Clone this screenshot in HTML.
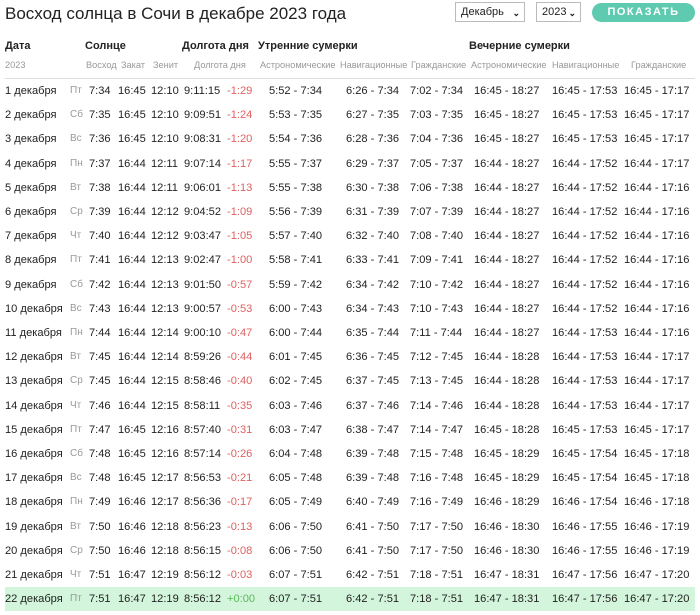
<!DOCTYPE html>
<html><head><meta charset="utf-8"><style>
*{margin:0;padding:0;box-sizing:border-box}
body{width:700px;height:615px;background:#fff;font-family:"Liberation Sans",Arial,sans-serif;color:#222;position:relative;overflow:hidden}
.t{position:absolute;left:5px;top:4px;font-size:17px;color:#222}
.sel{position:absolute;top:2px;height:20px;border:1px solid #bbb;font-size:11px;line-height:18px;padding-left:5px;background:#fff}
.sel b{position:absolute;right:4px;top:1px;font-size:9px}
.btn{position:absolute;left:592px;top:3px;width:103px;height:19px;border-radius:10px;background:#5ecbb0;color:#fff;font-weight:bold;font-size:11px;letter-spacing:1.5px;text-align:center;line-height:19px}
.h{position:absolute;top:40px;font-size:11px;font-weight:bold}
.s{position:absolute;top:60px;font-size:9.2px;color:#999}
.line{position:absolute;left:5px;top:78px;width:690px;height:1px;background:#ddd}
.r{position:absolute;left:5px;width:690px;height:24px;font-size:11.1px;line-height:24px}
.r span{position:absolute;white-space:nowrap}
.hl{background:#d3f5dc}
.a{left:0}.b{left:65px;color:#999;font-size:10px}.c{left:84px}.d{left:113px}.e{left:146px}.f{left:179px}.g{left:222px;color:#e06060}.gg{left:222px;color:#5cb85c}
.i{left:264px}.j{left:341px}.k{left:405px}.l{left:469px}.m{left:547px}.n{left:619px}
</style></head><body>
<div class="t">Восход солнца в Сочи в декабре 2023 года</div>
<div class="sel" style="left:455px;width:70px">Декабрь<b>&#8964;</b></div>
<div class="sel" style="left:536px;width:45px">2023<b>&#8964;</b></div>
<div class="btn">ПОКАЗАТЬ</div>
<div class="h" style="left:5px">Дата</div>
<div class="h" style="left:85px">Солнце</div>
<div class="h" style="left:182px">Долгота дня</div>
<div class="h" style="left:258px">Утренние сумерки</div>
<div class="h" style="left:469px">Вечерние сумерки</div>
<div class="s" style="left:5px">2023</div>
<div class="s" style="left:86px">Восход</div>
<div class="s" style="left:121px">Закат</div>
<div class="s" style="left:153px">Зенит</div>
<div class="s" style="left:194px">Долгота дня</div>
<div class="s" style="left:260px">Астрономические</div>
<div class="s" style="left:340px">Навигационные</div>
<div class="s" style="left:411px">Гражданские</div>
<div class="s" style="left:471px">Астрономические</div>
<div class="s" style="left:552px">Навигационные</div>
<div class="s" style="left:631px">Гражданские</div>
<div class="line"></div>

<div class="r" style="top:79px"><span class="a">1 декабря</span><span class="b">Пт</span><span class="c">7:34</span><span class="d">16:45</span><span class="e">12:10</span><span class="f">9:11:15</span><span class="g">-1:29</span><span class="i">5:52 - 7:34</span><span class="j">6:26 - 7:34</span><span class="k">7:02 - 7:34</span><span class="l">16:45 - 18:27</span><span class="m">16:45 - 17:53</span><span class="n">16:45 - 17:17</span></div>
<div class="r" style="top:103px"><span class="a">2 декабря</span><span class="b">Сб</span><span class="c">7:35</span><span class="d">16:45</span><span class="e">12:10</span><span class="f">9:09:51</span><span class="g">-1:24</span><span class="i">5:53 - 7:35</span><span class="j">6:27 - 7:35</span><span class="k">7:03 - 7:35</span><span class="l">16:45 - 18:27</span><span class="m">16:45 - 17:53</span><span class="n">16:45 - 17:17</span></div>
<div class="r" style="top:127px"><span class="a">3 декабря</span><span class="b">Вс</span><span class="c">7:36</span><span class="d">16:45</span><span class="e">12:10</span><span class="f">9:08:31</span><span class="g">-1:20</span><span class="i">5:54 - 7:36</span><span class="j">6:28 - 7:36</span><span class="k">7:04 - 7:36</span><span class="l">16:45 - 18:27</span><span class="m">16:45 - 17:53</span><span class="n">16:45 - 17:17</span></div>
<div class="r" style="top:152px"><span class="a">4 декабря</span><span class="b">Пн</span><span class="c">7:37</span><span class="d">16:44</span><span class="e">12:11</span><span class="f">9:07:14</span><span class="g">-1:17</span><span class="i">5:55 - 7:37</span><span class="j">6:29 - 7:37</span><span class="k">7:05 - 7:37</span><span class="l">16:44 - 18:27</span><span class="m">16:44 - 17:52</span><span class="n">16:44 - 17:17</span></div>
<div class="r" style="top:176px"><span class="a">5 декабря</span><span class="b">Вт</span><span class="c">7:38</span><span class="d">16:44</span><span class="e">12:11</span><span class="f">9:06:01</span><span class="g">-1:13</span><span class="i">5:55 - 7:38</span><span class="j">6:30 - 7:38</span><span class="k">7:06 - 7:38</span><span class="l">16:44 - 18:27</span><span class="m">16:44 - 17:52</span><span class="n">16:44 - 17:16</span></div>
<div class="r" style="top:200px"><span class="a">6 декабря</span><span class="b">Ср</span><span class="c">7:39</span><span class="d">16:44</span><span class="e">12:12</span><span class="f">9:04:52</span><span class="g">-1:09</span><span class="i">5:56 - 7:39</span><span class="j">6:31 - 7:39</span><span class="k">7:07 - 7:39</span><span class="l">16:44 - 18:27</span><span class="m">16:44 - 17:52</span><span class="n">16:44 - 17:16</span></div>
<div class="r" style="top:224px"><span class="a">7 декабря</span><span class="b">Чт</span><span class="c">7:40</span><span class="d">16:44</span><span class="e">12:12</span><span class="f">9:03:47</span><span class="g">-1:05</span><span class="i">5:57 - 7:40</span><span class="j">6:32 - 7:40</span><span class="k">7:08 - 7:40</span><span class="l">16:44 - 18:27</span><span class="m">16:44 - 17:52</span><span class="n">16:44 - 17:16</span></div>
<div class="r" style="top:248px"><span class="a">8 декабря</span><span class="b">Пт</span><span class="c">7:41</span><span class="d">16:44</span><span class="e">12:13</span><span class="f">9:02:47</span><span class="g">-1:00</span><span class="i">5:58 - 7:41</span><span class="j">6:33 - 7:41</span><span class="k">7:09 - 7:41</span><span class="l">16:44 - 18:27</span><span class="m">16:44 - 17:52</span><span class="n">16:44 - 17:16</span></div>
<div class="r" style="top:273px"><span class="a">9 декабря</span><span class="b">Сб</span><span class="c">7:42</span><span class="d">16:44</span><span class="e">12:13</span><span class="f">9:01:50</span><span class="g">-0:57</span><span class="i">5:59 - 7:42</span><span class="j">6:34 - 7:42</span><span class="k">7:10 - 7:42</span><span class="l">16:44 - 18:27</span><span class="m">16:44 - 17:52</span><span class="n">16:44 - 17:16</span></div>
<div class="r" style="top:297px"><span class="a">10 декабря</span><span class="b">Вс</span><span class="c">7:43</span><span class="d">16:44</span><span class="e">12:13</span><span class="f">9:00:57</span><span class="g">-0:53</span><span class="i">6:00 - 7:43</span><span class="j">6:34 - 7:43</span><span class="k">7:10 - 7:43</span><span class="l">16:44 - 18:27</span><span class="m">16:44 - 17:52</span><span class="n">16:44 - 17:16</span></div>
<div class="r" style="top:321px"><span class="a">11 декабря</span><span class="b">Пн</span><span class="c">7:44</span><span class="d">16:44</span><span class="e">12:14</span><span class="f">9:00:10</span><span class="g">-0:47</span><span class="i">6:00 - 7:44</span><span class="j">6:35 - 7:44</span><span class="k">7:11 - 7:44</span><span class="l">16:44 - 18:27</span><span class="m">16:44 - 17:53</span><span class="n">16:44 - 17:16</span></div>
<div class="r" style="top:345px"><span class="a">12 декабря</span><span class="b">Вт</span><span class="c">7:45</span><span class="d">16:44</span><span class="e">12:14</span><span class="f">8:59:26</span><span class="g">-0:44</span><span class="i">6:01 - 7:45</span><span class="j">6:36 - 7:45</span><span class="k">7:12 - 7:45</span><span class="l">16:44 - 18:28</span><span class="m">16:44 - 17:53</span><span class="n">16:44 - 17:17</span></div>
<div class="r" style="top:369px"><span class="a">13 декабря</span><span class="b">Ср</span><span class="c">7:45</span><span class="d">16:44</span><span class="e">12:15</span><span class="f">8:58:46</span><span class="g">-0:40</span><span class="i">6:02 - 7:45</span><span class="j">6:37 - 7:45</span><span class="k">7:13 - 7:45</span><span class="l">16:44 - 18:28</span><span class="m">16:44 - 17:53</span><span class="n">16:44 - 17:17</span></div>
<div class="r" style="top:394px"><span class="a">14 декабря</span><span class="b">Чт</span><span class="c">7:46</span><span class="d">16:44</span><span class="e">12:15</span><span class="f">8:58:11</span><span class="g">-0:35</span><span class="i">6:03 - 7:46</span><span class="j">6:37 - 7:46</span><span class="k">7:14 - 7:46</span><span class="l">16:44 - 18:28</span><span class="m">16:44 - 17:53</span><span class="n">16:44 - 17:17</span></div>
<div class="r" style="top:418px"><span class="a">15 декабря</span><span class="b">Пт</span><span class="c">7:47</span><span class="d">16:45</span><span class="e">12:16</span><span class="f">8:57:40</span><span class="g">-0:31</span><span class="i">6:03 - 7:47</span><span class="j">6:38 - 7:47</span><span class="k">7:14 - 7:47</span><span class="l">16:45 - 18:28</span><span class="m">16:45 - 17:53</span><span class="n">16:45 - 17:17</span></div>
<div class="r" style="top:442px"><span class="a">16 декабря</span><span class="b">Сб</span><span class="c">7:48</span><span class="d">16:45</span><span class="e">12:16</span><span class="f">8:57:14</span><span class="g">-0:26</span><span class="i">6:04 - 7:48</span><span class="j">6:39 - 7:48</span><span class="k">7:15 - 7:48</span><span class="l">16:45 - 18:29</span><span class="m">16:45 - 17:54</span><span class="n">16:45 - 17:18</span></div>
<div class="r" style="top:466px"><span class="a">17 декабря</span><span class="b">Вс</span><span class="c">7:48</span><span class="d">16:45</span><span class="e">12:17</span><span class="f">8:56:53</span><span class="g">-0:21</span><span class="i">6:05 - 7:48</span><span class="j">6:39 - 7:48</span><span class="k">7:16 - 7:48</span><span class="l">16:45 - 18:29</span><span class="m">16:45 - 17:54</span><span class="n">16:45 - 17:18</span></div>
<div class="r" style="top:490px"><span class="a">18 декабря</span><span class="b">Пн</span><span class="c">7:49</span><span class="d">16:46</span><span class="e">12:17</span><span class="f">8:56:36</span><span class="g">-0:17</span><span class="i">6:05 - 7:49</span><span class="j">6:40 - 7:49</span><span class="k">7:16 - 7:49</span><span class="l">16:46 - 18:29</span><span class="m">16:46 - 17:54</span><span class="n">16:46 - 17:18</span></div>
<div class="r" style="top:515px"><span class="a">19 декабря</span><span class="b">Вт</span><span class="c">7:50</span><span class="d">16:46</span><span class="e">12:18</span><span class="f">8:56:23</span><span class="g">-0:13</span><span class="i">6:06 - 7:50</span><span class="j">6:41 - 7:50</span><span class="k">7:17 - 7:50</span><span class="l">16:46 - 18:30</span><span class="m">16:46 - 17:55</span><span class="n">16:46 - 17:19</span></div>
<div class="r" style="top:539px"><span class="a">20 декабря</span><span class="b">Ср</span><span class="c">7:50</span><span class="d">16:46</span><span class="e">12:18</span><span class="f">8:56:15</span><span class="g">-0:08</span><span class="i">6:06 - 7:50</span><span class="j">6:41 - 7:50</span><span class="k">7:17 - 7:50</span><span class="l">16:46 - 18:30</span><span class="m">16:46 - 17:55</span><span class="n">16:46 - 17:19</span></div>
<div class="r" style="top:563px"><span class="a">21 декабря</span><span class="b">Чт</span><span class="c">7:51</span><span class="d">16:47</span><span class="e">12:19</span><span class="f">8:56:12</span><span class="g">-0:03</span><span class="i">6:07 - 7:51</span><span class="j">6:42 - 7:51</span><span class="k">7:18 - 7:51</span><span class="l">16:47 - 18:31</span><span class="m">16:47 - 17:56</span><span class="n">16:47 - 17:20</span></div>
<div class="r hl" style="top:587px"><span class="a">22 декабря</span><span class="b">Пт</span><span class="c">7:51</span><span class="d">16:47</span><span class="e">12:19</span><span class="f">8:56:12</span><span class="gg">+0:00</span><span class="i">6:07 - 7:51</span><span class="j">6:42 - 7:51</span><span class="k">7:18 - 7:51</span><span class="l">16:47 - 18:31</span><span class="m">16:47 - 17:56</span><span class="n">16:47 - 17:20</span></div>
</body></html>
